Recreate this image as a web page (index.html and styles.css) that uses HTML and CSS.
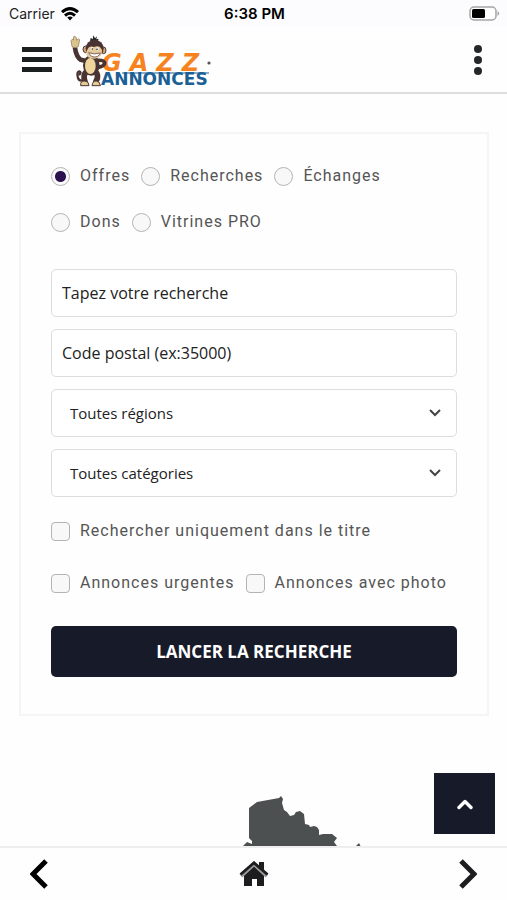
FILE: index.html
```html
<!DOCTYPE html>
<html lang="fr">
<head>
    <meta charset="UTF-8">
    <meta name="viewport" content="width=device-width, initial-scale=1.0">
    <title>Gazz Annonces</title>
    <link rel="stylesheet" href="styles.css">
</head>
<body>
    <div class="status-bar">
        <div class="carrier">
            <span>Carrier</span>
            <svg width="18" height="14" viewBox="0 0 18 14" fill="none" stroke="#000" stroke-width="3">
                <path d="M1 5.2Q9-2 17 5.2"/>
                <path d="M4 8.6Q9 4 14 8.6"/>
                <path d="M9 13.5L6.2 10.6Q9 8.6 11.8 10.6Z" fill="#000" stroke="none"/>
            </svg>
        </div>
        <div class="clock">6:38 PM</div>
        <div class="battery">
            <svg width="31" height="15" viewBox="0 0 31 15">
                <rect x="1" y="1" width="26" height="13" rx="4" fill="#fff" stroke="#a5a5a5" stroke-width="1.5"/>
                <rect x="3" y="3" width="13" height="9" rx="1.5" fill="#000"/>
                <path d="M28.5 5Q32 7.5 28.5 10Z" fill="#a5a5a5"/>
            </svg>
        </div>
    </div>

    <header class="header">
        <button class="icon-btn" type="button" aria-label="Menu">
            <svg width="30" height="26" viewBox="0 0 30 26" fill="#1c1f20">
                <rect width="30" height="5" y="0"/>
                <rect width="30" height="5" y="10"/>
                <rect width="30" height="5" y="20"/>
            </svg>
        </button>
        <a class="logo" href="#" aria-label="Gazz Annonces">
            <svg width="150" height="60" viewBox="0 -3 150 60">
                <text class="logo-gazz" x="32" y="38">GAZZ</text>
                <path d="M52 40H139" stroke="#1c5f95" stroke-width="1"/>
                <text class="logo-annonces" x="31" y="52">ANNONCES</text>
                <circle cx="139" cy="30" r="1.6" fill="#555"/>
                <svg width="40" height="54" viewBox="30 6 120 162">
                    <!-- queue -->
                    <path d="M78 142Q60 156 54 141Q49 122 58 121Q65 124 59 130" fill="none" stroke="#4a3433" stroke-width="7" stroke-linecap="round"/>
                    <!-- bras -->
                    <path d="M45 51Q49 78 62 86L82 91" fill="none" stroke="#4a3433" stroke-width="14" stroke-linecap="round" stroke-linejoin="round"/>
                    <path d="M108 88Q132 86 134 95Q134 105 114 109" fill="none" stroke="#4a3433" stroke-width="11" stroke-linecap="round"/>
                    <path d="M36 47L33 29Q36 22 41 27L40 18Q45 12 49 20L50 28Q56 20 59 26L55 47Q45 54 36 47Z" fill="#dcc48f" stroke="#8a7558" stroke-width="2"/>
                    <!-- jambes -->
                    <path d="M81 119Q67 133 75 151M105 120Q119 133 108 151" fill="none" stroke="#4a3433" stroke-width="17" stroke-linecap="round"/>
                    <!-- corps -->
                    <ellipse cx="94" cy="103" rx="25" ry="31" fill="#4a3433"/>
                    <ellipse cx="91" cy="105" rx="16" ry="24" fill="#eed59c"/>
                    <path d="M62 164Q60 149 75 150Q87 151 87 164Z" fill="#e6cc94" stroke="#4a3433" stroke-width="3"/>
                    <path d="M96 164Q98 149 109 150Q121 152 121 164Z" fill="#e6cc94" stroke="#4a3433" stroke-width="3"/>
                    <!-- tete -->
                    <path d="M90 32L92 20L98 25L100 13L105 22L111 16L109 25L116 23L112 34Z" fill="#29252b"/>
                    <ellipse cx="77" cy="55" rx="8" ry="10" fill="#cda578" stroke="#4a3433" stroke-width="3"/>
                    <ellipse cx="131" cy="58" rx="7" ry="10" fill="#cda578" stroke="#4a3433" stroke-width="3"/>
                    <ellipse cx="104" cy="52" rx="27" ry="26" fill="#4a3433"/>
                    <path d="M82 56Q88 42 102 48Q119 40 126 57Q128 80 104 83Q80 83 79 69Q78 62 82 56Z" fill="#e6c99a"/>
                    <ellipse cx="96" cy="53" rx="4" ry="5" fill="#fff"/>
                    <ellipse cx="112" cy="54" rx="4" ry="5" fill="#fff"/>
                    <circle cx="97" cy="54" r="2.5" fill="#222"/>
                    <circle cx="111" cy="55" r="2.5" fill="#222"/>
                    <path d="M86 65Q103 72 121 66Q115 79 102 78Q89 77 86 65Z" fill="#fff" stroke="#4a3433" stroke-width="2"/>
                </svg>
            </svg>
        </a>
        <button class="icon-btn" type="button" aria-label="Options">
            <svg width="10" height="32" viewBox="0 0 10 32" fill="#25282b">
                <circle cx="5" cy="5" r="4"/>
                <circle cx="5" cy="16" r="4"/>
                <circle cx="5" cy="27" r="4"/>
            </svg>
        </button>
    </header>

    <main class="content">
        <form class="search-card">
            <div class="options">
                <label class="option"><input type="radio" name="type" checked>Offres</label>
                <label class="option"><input type="radio" name="type">Recherches</label>
                <label class="option"><input type="radio" name="type">Échanges</label>
                <label class="option"><input type="radio" name="type">Dons</label>
                <label class="option"><input type="radio" name="type">Vitrines PRO</label>
            </div>

            <div class="fields">
                <input class="field" type="text" placeholder="Tapez votre recherche" aria-label="Tapez votre recherche">
                <input class="field" type="text" placeholder="Code postal (ex:35000)" aria-label="Code postal">
                <div class="select">
                    <select class="field" aria-label="Régions">
                        <option>Toutes régions</option>
                    </select>
                    <svg class="chevron" width="12" height="8" viewBox="0 0 12 8"><path d="M1 1L6 6L11 1" fill="none" stroke="#444" stroke-width="2"/></svg>
                </div>
                <div class="select">
                    <select class="field" aria-label="Catégories">
                        <option>Toutes catégories</option>
                    </select>
                    <svg class="chevron" width="12" height="8" viewBox="0 0 12 8"><path d="M1 1L6 6L11 1" fill="none" stroke="#444" stroke-width="2"/></svg>
                </div>
            </div>

            <div class="options checks">
                <label class="option"><input type="checkbox">Rechercher uniquement dans le titre</label>
                <label class="option"><input type="checkbox">Annonces urgentes</label>
                <label class="option"><input type="checkbox">Annonces avec photo</label>
            </div>

            <button class="submit" type="submit">LANCER LA RECHERCHE</button>
        </form>

        <div class="map">
            <svg width="400" height="60" viewBox="0 0 400 60" fill="#4d5051">
                <path d="M195 13L203 7L225 3L227 1L229 4L228 8L230 15L233 17L236 21L240 20L242 17L246 16L250 19L251 29L255 30L256 32L260 31L263 32L265 35V40L269 39L278 39L283 43L280 47L283 51L287 60H185L189 51L193 47L198 49V46L195 43Z"/>
                <path d="M301 52L305 48L307 52L306 60H300Z"/>
            </svg>
        </div>
    </main>

    <button class="to-top" type="button" aria-label="Haut de page">
        <svg width="16" height="12" viewBox="0 0 16 12"><path d="M2 9.5L8 3.5L14 9.5" fill="none" stroke="#fff" stroke-width="3.4" stroke-linecap="round" stroke-linejoin="round"/></svg>
    </button>

    <nav class="bottom-nav">
        <a href="#" aria-label="Précédent">
            <svg width="18" height="30" viewBox="0 0 18 30"><path d="M16 2L3 15L16 28" fill="none" stroke="#000" stroke-width="5"/></svg>
        </a>
        <a href="#" aria-label="Accueil">
            <svg width="30" height="26" viewBox="0 0 30 26">
                <path d="M20 1H25V10L20 6Z" fill="#1d1d1f"/>
                <path d="M5 14L15 5L25 14V25H18V18H13V25H5Z" fill="#1d1d1f"/>
                <path d="M2 15L15 3L28 15" fill="none" stroke="#999" stroke-width="4"/>
                <path d="M1.5 13.5L15 1.8L28.5 13.5" fill="none" stroke="#1d1d1f" stroke-width="2.8"/>
            </svg>
        </a>
        <a href="#" aria-label="Suivant">
            <svg width="18" height="30" viewBox="0 0 18 30"><path d="M2 2L15 15L2 28" fill="none" stroke="#1d1d1f" stroke-width="5"/></svg>
        </a>
    </nav>
</body>
</html>
```

FILE: styles.css
```css
* {
    box-sizing: border-box;
}

body {
    margin: 0;
    height: 100vh;
    display: flex;
    flex-direction: column;
    background: #fefefe;
    font-family: "Open Sans", sans-serif;
    color: #222;
}

svg {
    display: block;
}

button {
    border: none;
    padding: 0;
    cursor: pointer;
}

/* barre d'etat */
.status-bar {
    display: grid;
    grid-template-columns: 1fr auto 1fr;
    align-items: center;
    height: 27px;
    flex-shrink: 0;
    padding: 0 7px 0 9px;
    background: #fcfcfe;
    font-family: Inter, sans-serif;
    font-size: 14px;
}

.carrier {
    display: flex;
    align-items: center;
    gap: 6px;
}

.clock {
    font-size: 15px;
    font-weight: 600;
    color: #000;
}

.battery {
    justify-self: end;
}

/* en-tete */
.header {
    display: flex;
    align-items: center;
    height: 67px;
    flex-shrink: 0;
    padding: 0 24px 0 22px;
    border-bottom: 2px solid #dedede;
}

.icon-btn {
    background: none;
}

.logo {
    margin: 0 auto 0 18px;
}

.logo-gazz {
    font-family: "DejaVu Sans", sans-serif;
    font-size: 24px;
    font-weight: bold;
    font-style: italic;
    letter-spacing: 8px;
    fill: #f5831f;
}

.logo-annonces {
    font-family: "DejaVu Sans", sans-serif;
    font-size: 17px;
    font-weight: bold;
    fill: #1c5f95;
}

/* recherche */
.content {
    flex: 1;
    min-height: 0;
    overflow-y: auto;
    scrollbar-width: none;
    padding: 38px 18px 0 19px;
}

.search-card {
    padding: 30px 30px 37px;
    border: 2px solid #f5f5f5;
}

.options {
    display: flex;
    flex-wrap: wrap;
    column-gap: 11px;
    row-gap: 22px;
}

.option {
    display: flex;
    align-items: center;
    gap: 10px;
    font-family: Roboto, sans-serif;
    font-size: 16px;
    line-height: 24px;
    letter-spacing: 1px;
    color: #555;
}

.option input {
    appearance: none;
    width: 19px;
    height: 19px;
    margin: 0;
    border: 1px solid #b4b4b4;
    border-radius: 4px;
    background: #f8f8f8;
}

.option input[type="radio"] {
    border-radius: 50%;
}

.option input[type="radio"]:checked {
    background: radial-gradient(circle, #2d1250 5px, #fafafa 6px);
}

.fields {
    display: flex;
    flex-direction: column;
    gap: 12px;
    margin: 35px 0 22px;
}

.field {
    display: block;
    width: 100%;
    height: 48px;
    padding: 0 10px;
    border: 1px solid #ddd;
    border-radius: 5px;
    background: #fff;
    font-family: "Open Sans", sans-serif;
    font-size: 16px;
    color: #222;
}

.field::placeholder {
    color: #222;
    opacity: 1;
}

.select {
    position: relative;
}

.select .field {
    appearance: none;
    padding: 0 18px;
    font-size: 15px;
}

.chevron {
    position: absolute;
    top: 20px;
    right: 16px;
    pointer-events: none;
}

.checks {
    row-gap: 28px;
}

.submit {
    width: 100%;
    height: 51px;
    margin-top: 31px;
    border-radius: 5px;
    background: #171b29;
    color: #fff;
    font-family: "Open Sans", sans-serif;
    font-size: 17px;
    font-weight: bold;
}

.map {
    display: flex;
    justify-content: center;
    margin-top: 79px;
}

.to-top {
    position: fixed;
    right: 12px;
    bottom: 66px;
    width: 61px;
    height: 61px;
    display: flex;
    align-items: center;
    justify-content: center;
    background: #171b29;
}

/* navigation du bas */
.bottom-nav {
    display: flex;
    align-items: center;
    justify-content: space-between;
    height: 54px;
    flex-shrink: 0;
    padding: 0 30px;
    border-top: 2px solid #eee;
    background: #fefefe;
}
```
